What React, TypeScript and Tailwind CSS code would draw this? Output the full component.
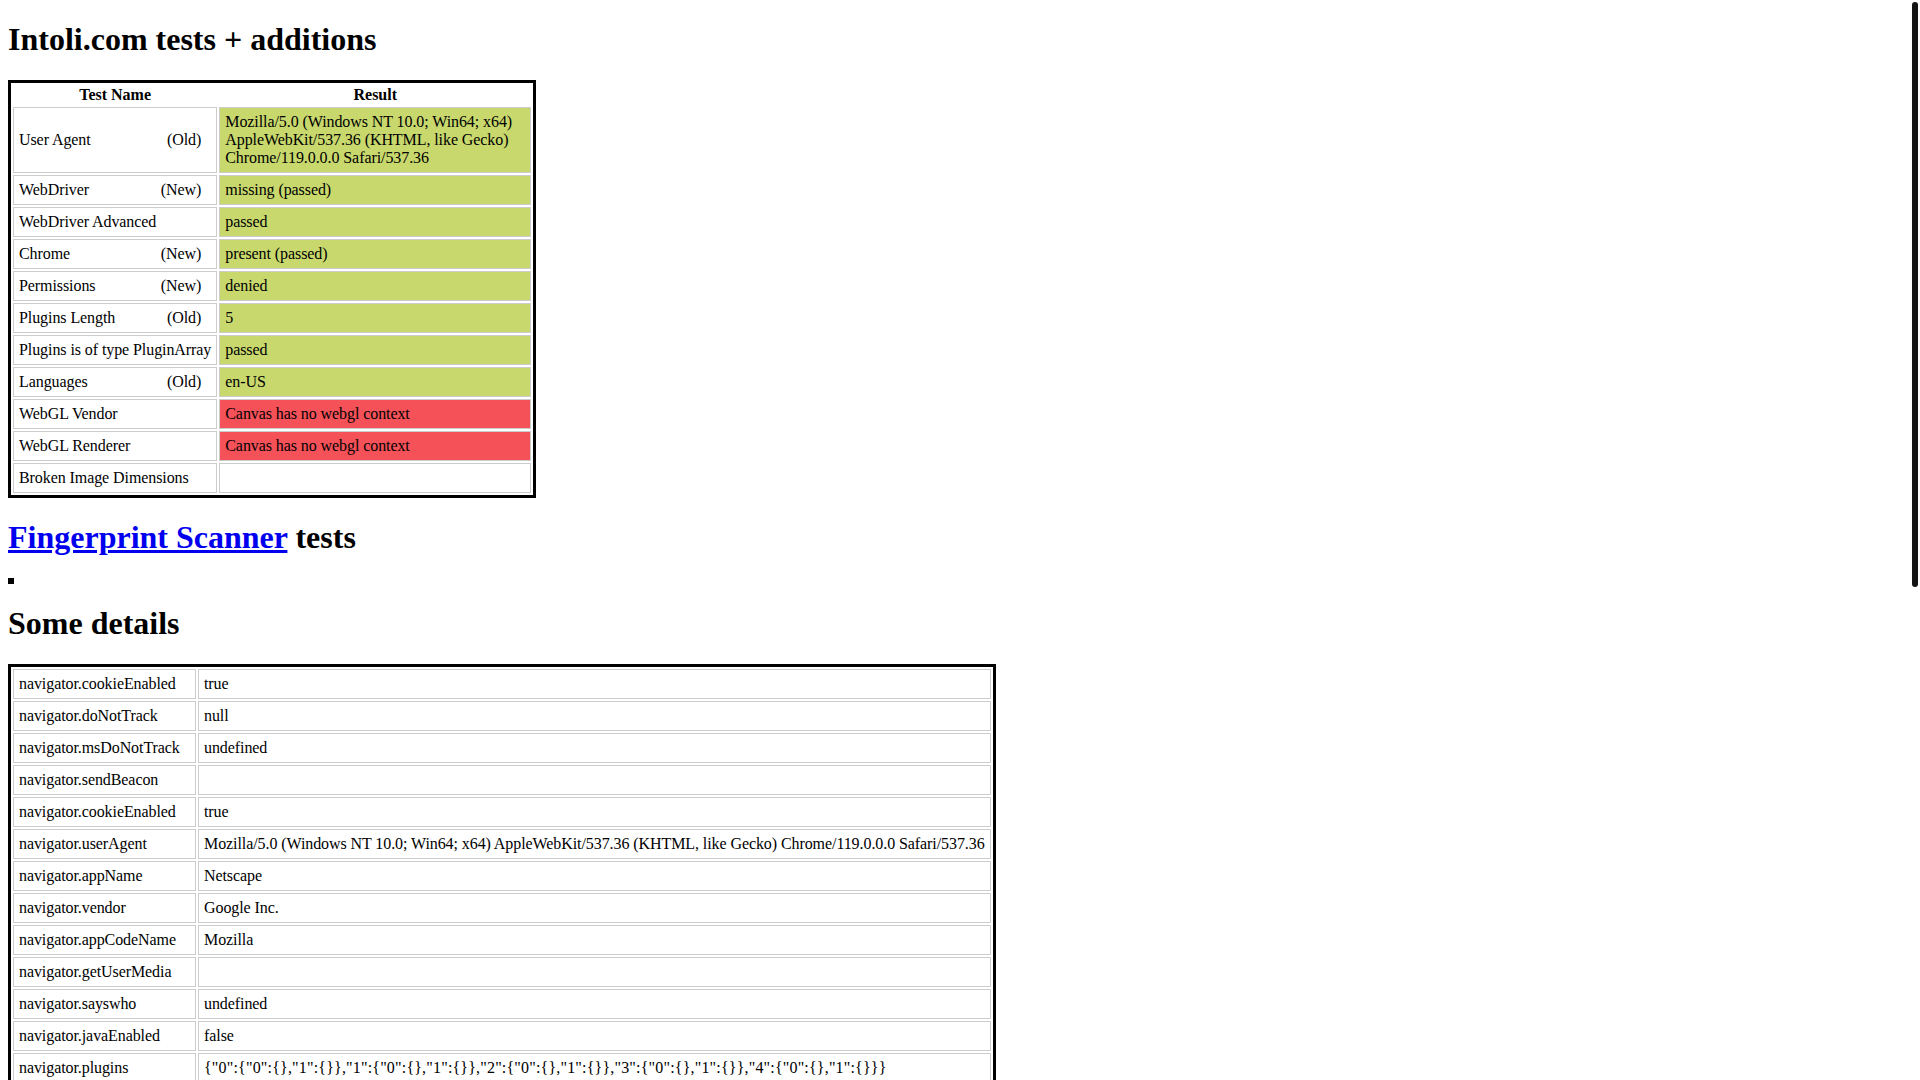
import React from "react";

type TestRow = {
  name: string;
  tag?: string;
  result: string;
  status: "passed" | "failed" | "";
};

const intoliTests: TestRow[] = [
  {
    name: "User Agent",
    tag: "(Old)",
    result:
      "Mozilla/5.0 (Windows NT 10.0; Win64; x64) AppleWebKit/537.36 (KHTML, like Gecko) Chrome/119.0.0.0 Safari/537.36",
    status: "passed",
  },
  { name: "WebDriver", tag: "(New)", result: "missing (passed)", status: "passed" },
  { name: "WebDriver Advanced", result: "passed", status: "passed" },
  { name: "Chrome", tag: "(New)", result: "present (passed)", status: "passed" },
  { name: "Permissions", tag: "(New)", result: "denied", status: "passed" },
  { name: "Plugins Length", tag: "(Old)", result: "5", status: "passed" },
  { name: "Plugins is of type PluginArray", result: "passed", status: "passed" },
  { name: "Languages", tag: "(Old)", result: "en-US", status: "passed" },
  { name: "WebGL Vendor", result: "Canvas has no webgl context", status: "failed" },
  { name: "WebGL Renderer", result: "Canvas has no webgl context", status: "failed" },
  { name: "Broken Image Dimensions", result: "", status: "" },
];

const ua =
  "Mozilla/5.0 (Windows NT 10.0; Win64; x64) AppleWebKit/537.36 (KHTML, like Gecko) Chrome/119.0.0.0 Safari/537.36";

const details: [string, string][] = [
  ["navigator.cookieEnabled", "true"],
  ["navigator.doNotTrack", "null"],
  ["navigator.msDoNotTrack", "undefined"],
  ["navigator.sendBeacon", ""],
  ["navigator.cookieEnabled", "true"],
  ["navigator.userAgent", ua],
  ["navigator.appName", "Netscape"],
  ["navigator.vendor", "Google Inc."],
  ["navigator.appCodeName", "Mozilla"],
  ["navigator.getUserMedia", ""],
  ["navigator.sayswho", "undefined"],
  ["navigator.javaEnabled", "false"],
  [
    "navigator.plugins",
    '{"0":{"0":{},"1":{}},"1":{"0":{},"1":{}},"2":{"0":{},"1":{}},"3":{"0":{},"1":{}},"4":{"0":{},"1":{}}}',
  ],
  ["navigator.mimeTypes", '{"0":{},"1":{}}'],
  ["navigator.language", "en-US"],
  ["navigator.languages", '["en-US"]'],
  ["navigator.platform", "Win32"],
  ["navigator.product", "Gecko"],
  ["navigator.productSub", "20030107"],
  ["navigator.vendorSub", ""],
  ["navigator.onLine", "true"],
  ["navigator.webdriver", "false"],
  ["navigator.appVersion", ua.replace("Mozilla/", "")],
  ["navigator.buildID", "undefined"],
  ["navigator.oscpu", "undefined"],
  ["navigator.cpuClass", "undefined"],
  ["navigator.deviceMemory", "8"],
  ["navigator.maxTouchPoints", "0"],
  ["navigator.storage", "{}"],
  ["navigator.locks", "{}"],
  ["navigator.serial", "{}"],
  ["screen.width", "1920"],
  ["screen.height", "1080"],
  ["screen.availWidth", "1920"],
  ["screen.availHeight", "1080"],
  ["screen.colorDepth", "24"],
  ["screen.pixelDepth", "24"],
  ["window.outerWidth", "1920"],
  ["window.outerHeight", "1080"],
  ["window.innerWidth", "1920"],
  ["window.innerHeight", "1080"],
];

const cell = "border border-[#ccc] p-[5px] text-left align-middle";

const App: React.FC = () => {
  return (
    <div className="mx-2 pb-2 font-['Liberation_Serif',serif] text-[16px] leading-[normal] text-black">
      <h1 className="my-[21.44px] text-[32px] font-bold leading-[normal]">
        Intoli.com tests + additions
      </h1>

      <table className="border-separate border-spacing-[2px] border-[3px] border-black">
        <thead>
          <tr>
            <th className="p-[1px] text-center font-bold">Test Name</th>
            <th className="w-[312px] p-[1px] text-center font-bold">Result</th>
          </tr>
        </thead>
        <tbody>
          {intoliTests.map((test) => (
            <tr key={test.name}>
              <td className={`${cell} tracking-[-0.08px]`}>
                {test.tag && (
                  <span className="float-right mr-[10px]">{test.tag}</span>
                )}
                {test.name}
              </td>
              <td
                className={`${cell} tracking-[-0.08px] ${
                  test.status === "passed"
                    ? "bg-[#c8d86d]"
                    : test.status === "failed"
                    ? "bg-[#f45159]"
                    : ""
                }`}
              >
                {test.result}
              </td>
            </tr>
          ))}
        </tbody>
      </table>

      <h1 className="my-[21.44px] text-[32px] font-bold leading-[normal]">
        <a href="#" className="text-[#0000ee] underline">
          Fingerprint Scanner
        </a>{" "}
        tests
      </h1>

      {/* empty results table from the scanner */}
      <div className="h-[6px] w-[6px] border-[3px] border-black" />

      <h1 className="my-[21.44px] text-[32px] font-bold leading-[normal]">
        Some details
      </h1>

      <table className="border-separate border-spacing-[2px] border-[3px] border-black">
        <tbody>
          {details.map(([key, value], i) => (
            <tr key={i}>
              <td
                className={`${cell} tracking-[-0.08px] ${
                  i === 0 ? "w-[183px]" : ""
                }`}
              >
                {key}
              </td>
              <td
                className={`${cell} ${
                  key === "navigator.plugins"
                    ? "tracking-[0.18px]"
                    : "tracking-[-0.08px]"
                }`}
              >
                {value}
              </td>
            </tr>
          ))}
        </tbody>
      </table>

      {/* overlay scrollbar thumb */}
      <div
        aria-hidden
        className="fixed right-[2px] top-[2px] h-[585px] w-[6px] rounded-full bg-[#141414]"
      />
    </div>
  );
};

export default App;
